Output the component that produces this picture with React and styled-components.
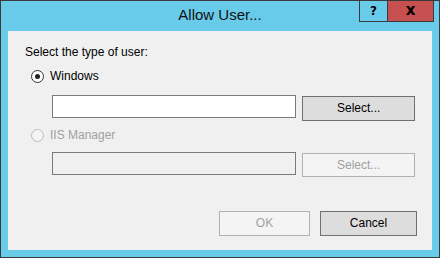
import styled, { createGlobalStyle } from "styled-components";

const GlobalStyle = createGlobalStyle`
  html, body {
    margin: 0;
    padding: 0;
    background: #69cbea;
  }
  body {
    font-family: "Segoe UI", "Liberation Sans", Arial, sans-serif;
  }
`;

const Window = styled.div`
  box-sizing: border-box;
  width: 440px;
  height: 258px;
  border: 1px solid #3a3a3a;
  background: #69cbea;
  padding: 0 7px 7px;
  display: flex;
  flex-direction: column;
`;

const TitleBar = styled.div`
  height: 30px;
  display: grid;
  grid-template-columns: 1fr auto 1fr;
  align-items: start;
`;

const Title = styled.div`
  grid-column: 2;
  font-size: 15px;
  line-height: 20px;
  padding-top: 4px;
  color: #111;
`;

const Caption = styled.div`
  grid-column: 3;
  justify-self: end;
  display: flex;
  margin: -1px -2px 0 0;
`;

const CaptionButton = styled.div`
  box-sizing: border-box;
  width: ${(p) => (p.$close ? "47px" : "29px")};
  height: 22px;
  border: 1px solid #3a3a3a;
  margin-left: ${(p) => (p.$close ? "-1px" : "0")};
  background: ${(p) => (p.$close ? "#c75050" : "transparent")};
  display: flex;
  align-items: center;
  justify-content: center;
  font-family: "DejaVu Sans", sans-serif;
  font-weight: bold;
  font-size: ${(p) => (p.$close ? "15px" : "12px")};
  line-height: 1;
  padding-bottom: ${(p) => (p.$close ? "2px" : "0")};
  color: #000;
`;

const Client = styled.div`
  flex: 1;
  background: #f0f0f0;
  padding: 14px 17px 14px 17px;
  display: flex;
  flex-direction: column;
  font-size: 12px;
  line-height: 15px;
  color: #000;
`;

const Label = styled.div``;

const RadioRow = styled.label`
  display: flex;
  align-items: center;
  gap: 6px;
  margin: ${(p) => p.$mt}px 0 0 6px;
  color: ${(p) => (p.$disabled ? "#a0a0a0" : "#000")};
`;

const RadioCircle = styled.span`
  box-sizing: border-box;
  width: 13px;
  height: 13px;
  border-radius: 50%;
  border: 1px solid ${(p) => (p.$disabled ? "#bcbcbc" : "#333")};
  background: ${(p) => (p.$disabled ? "#f4f4f4" : "#fff")};
  display: flex;
  align-items: center;
  justify-content: center;

  &::after {
    content: "";
    width: 5px;
    height: 5px;
    border-radius: 50%;
    background: #222;
    display: ${(p) => (p.$checked ? "block" : "none")};
  }
`;

const FieldRow = styled.div`
  display: flex;
  align-items: flex-start;
  gap: 6px;
  margin: ${(p) => p.$mt}px 0 0 27px;
`;

const TextBox = styled.div`
  box-sizing: border-box;
  width: 245px;
  height: 23px;
  border: 1px solid #7a7a7a;
  background: ${(p) => (p.$disabled ? "#f0f0f0" : "#fff")};
`;

const Button = styled.div`
  box-sizing: border-box;
  width: ${(p) => p.$w}px;
  height: ${(p) => p.$h || 25}px;
  margin-top: ${(p) => p.$mt || 0}px;
  border: 1px solid ${(p) => (p.$disabled ? "#adb2b5" : "#707070")};
  background: ${(p) => (p.$disabled ? "#f4f4f4" : "#dddddd")};
  color: ${(p) => (p.$disabled ? "#a0a0a0" : "#000")};
  display: flex;
  align-items: center;
  justify-content: center;
`;

const Footer = styled.div`
  margin-top: auto;
  display: flex;
  justify-content: flex-end;
  gap: 10px;
  margin-right: -2px;
`;

const App = () => {
  return (
    <>
      <GlobalStyle />
      <Window>
        <TitleBar>
          <Title>Allow User...</Title>
          <Caption>
            <CaptionButton>?</CaptionButton>
            <CaptionButton $close>x</CaptionButton>
          </Caption>
        </TitleBar>
        <Client>
          <Label>Select the type of user:</Label>
          <RadioRow $mt={9}>
            <RadioCircle $checked />
            Windows
          </RadioRow>
          <FieldRow $mt={11}>
            <TextBox />
            <Button $w={113} $mt={1}>Select...</Button>
          </FieldRow>
          <RadioRow $mt={7} $disabled>
            <RadioCircle $disabled />
            IIS Manager
          </RadioRow>
          <FieldRow $mt={9}>
            <TextBox $disabled />
            <Button $w={113} $h={24} $mt={1} $disabled>Select...</Button>
          </FieldRow>
          <Footer>
            <Button $w={91} $disabled>OK</Button>
            <Button $w={97}>Cancel</Button>
          </Footer>
        </Client>
      </Window>
    </>
  );
};

export default App;
